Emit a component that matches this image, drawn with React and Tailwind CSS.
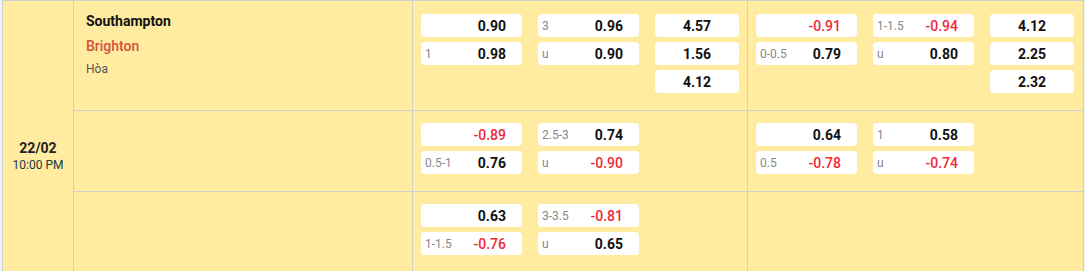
import React from 'react'

function Odd({ label, value, red, w = 'w-[101px]' }) {
  return (
    <div className={`${w} h-[23px] bg-white rounded flex items-center justify-between pl-1 pr-4`}>
      <span className="text-xs text-[#888]">{label}</span>
      <span className={`text-sm leading-4 ${red ? 'text-[#f0283a] font-medium' : 'text-[#111] font-bold'}`}>{value}</span>
    </div>
  )
}

function X12({ value }) {
  return (
    <div className="w-[84px] h-[23px] bg-white rounded flex items-center justify-center text-sm font-bold text-[#111]">
      {value}
    </div>
  )
}

// each market: [handicap pair, over/under pair]
function Market({ hdp, ou, x12 }) {
  return (
    <div className="flex gap-4">
      <div className="flex flex-col gap-[5px]">
        <Odd label="" value={hdp[0].v} red={hdp[0].r} />
        <Odd label={hdp[1].l} value={hdp[1].v} red={hdp[1].r} />
      </div>
      <div className="flex flex-col gap-[5px]">
        <Odd label={ou[0].l} value={ou[0].v} red={ou[0].r} />
        <Odd label="u" value={ou[1].v} red={ou[1].r} />
      </div>
      {x12 && (
        <div className="flex flex-col gap-[5px]">
          {x12.map((v, i) => <X12 key={i} value={v} />)}
        </div>
      )}
    </div>
  )
}

const cell = 'bg-[#ffeca1]'

export default function App() {
  return (
    <div className="min-h-screen bg-[#f1f1f1] pl-[2px] font-[Roboto,sans-serif]">
      <div className="w-[1082px] grid grid-cols-[70px_338px_334px_335px] grid-rows-[109px_80px_80px] gap-px bg-[#cfcfcf] border border-[#cfcfcf] border-b-0">
        <div className={`${cell} row-span-3 flex flex-col items-center pt-[139px]`}>
          <div className="text-sm leading-4 font-bold text-[#222]">22/02</div>
          <div className="text-xs leading-4 mt-px text-[#243746]">10:00 PM</div>
        </div>

        <div className={`${cell} pl-3 pt-3`}>
          <div className="text-sm leading-4 font-bold text-[#111]">Southampton</div>
          <div className="text-sm leading-4 font-medium text-[#d94c3f] mt-[9px]">Brighton</div>
          <div className="text-xs leading-4 text-[#555] mt-[7px]">Hòa</div>
        </div>
        <div className={`${cell} pl-2 pt-[13px]`}>
          <Market
            hdp={[{ v: '0.90' }, { l: '1', v: '0.98' }]}
            ou={[{ l: '3', v: '0.96' }, { v: '0.90' }]}
            x12={['4.57', '1.56', '4.12']}
          />
        </div>
        <div className={`${cell} pl-2 pt-[13px]`}>
          <Market
            hdp={[{ v: '-0.91', r: true }, { l: '0-0.5', v: '0.79' }]}
            ou={[{ l: '1-1.5', v: '-0.94', r: true }, { v: '0.80' }]}
            x12={['4.12', '2.25', '2.32']}
          />
        </div>

        <div className={cell}></div>
        <div className={`${cell} pl-2 pt-3`}>
          <Market
            hdp={[{ v: '-0.89', r: true }, { l: '0.5-1', v: '0.76' }]}
            ou={[{ l: '2.5-3', v: '0.74' }, { v: '-0.90', r: true }]}
          />
        </div>
        <div className={`${cell} pl-2 pt-3`}>
          <Market
            hdp={[{ v: '0.64' }, { l: '0.5', v: '-0.78', r: true }]}
            ou={[{ l: '1', v: '0.58' }, { v: '-0.74', r: true }]}
          />
        </div>

        <div className={cell}></div>
        <div className={`${cell} pl-2 pt-3`}>
          <Market
            hdp={[{ v: '0.63' }, { l: '1-1.5', v: '-0.76', r: true }]}
            ou={[{ l: '3-3.5', v: '-0.81', r: true }, { v: '0.65' }]}
          />
        </div>
        <div className={cell}></div>
      </div>
    </div>
  )
}
